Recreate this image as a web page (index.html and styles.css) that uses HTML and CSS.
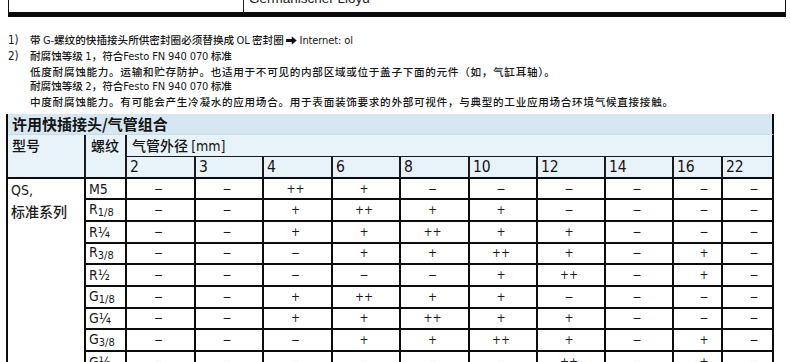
FILE: index.html
```html
<!DOCTYPE html>
<html lang="zh-CN">
<head>
<meta charset="utf-8">
<title>许用快插接头/气管组合</title>
<link rel="stylesheet" href="styles.css">
</head>
<body>
<div class="page">
  <div class="topbox">
    <div class="tb-left"></div>
    <div class="tb-right">Germanischer Lloyd</div>
  </div>

  <div class="notes">
    <div class="note">
      <span class="num">1)</span>
      <div class="ntext">带 <span class="lat">G-</span>螺纹的快插接头所供密封圈必须替换成 <span class="lat">OL</span> 密封圈 <svg class="arrow" viewBox="0 0 12 10" width="11" height="9"><path d="M0 3.4H6.3V0.4L11.8 5L6.3 9.6V6.6H0Z" fill="#111"/></svg> <span class="lat">Internet: ol</span></div>
    </div>
    <div class="note">
      <span class="num">2)</span>
      <div class="ntext">
        <div>耐腐蚀等级 <span class="lat">1</span>，符合<span class="lat">Festo FN 940 070</span> 标准</div>
        <div class="wide">低度耐腐蚀能力。运输和贮存防护。也适用于不可见的内部区域或位于盖子下面的元件（如，气缸耳轴）。</div>
        <div>耐腐蚀等级 <span class="lat">2</span>，符合<span class="lat">Festo FN 940 070</span> 标准</div>
        <div class="wide">中度耐腐蚀能力。有可能会产生冷凝水的应用场合。用于表面装饰要求的外部可视件，与典型的工业应用场合环境气候直接接触。</div>
      </div>
    </div>
  </div>

  <table class="combo">
    <colgroup>
      <col class="c-type"><col class="c-thread">
      <col class="c-w69"><col class="c-w68"><col class="c-w69"><col class="c-w68"><col class="c-w69">
      <col class="c-w68"><col class="c-w68"><col class="c-w68"><col class="c-w49"><col class="c-w51">
    </colgroup>
    <thead>
      <tr class="r-title"><th colspan="12" class="title">许用快插接头/气管组合</th></tr>
      <tr class="r-h1">
        <th rowspan="2" class="h-type">型号</th>
        <th rowspan="2" class="h-thread">螺纹</th>
        <th colspan="10" class="h-dia">气管外径 <span class="lat">[mm]</span></th>
      </tr>
      <tr class="r-h2">
        <th class="h-num">2</th><th class="h-num">3</th><th class="h-num">4</th><th class="h-num">6</th><th class="h-num">8</th>
        <th class="h-num">10</th><th class="h-num">12</th><th class="h-num">14</th><th class="h-num">16</th><th class="h-num">22</th>
      </tr>
    </thead>
    <tbody>
      <tr>
        <td rowspan="9" class="type"><div class="type-line"><span class="lat">QS,</span></div><div class="type-line">标准系列</div></td>
        <td class="thread">M5</td>
        <td>−</td><td>−</td><td>++</td><td>+</td><td>−</td><td>−</td><td>−</td><td>−</td><td class="nar">−</td><td class="nar">−</td>
      </tr>
      <tr>
        <td class="thread">R<span class="frac">1/8</span></td>
        <td>−</td><td>−</td><td>+</td><td>++</td><td>+</td><td>+</td><td>−</td><td>−</td><td class="nar">−</td><td class="nar">−</td>
      </tr>
      <tr>
        <td class="thread">R¼</td>
        <td>−</td><td>−</td><td>+</td><td>+</td><td>++</td><td>+</td><td>+</td><td>−</td><td class="nar">−</td><td class="nar">−</td>
      </tr>
      <tr>
        <td class="thread">R<span class="frac">3/8</span></td>
        <td>−</td><td>−</td><td>−</td><td>+</td><td>+</td><td>++</td><td>+</td><td>−</td><td class="nar">+</td><td class="nar">−</td>
      </tr>
      <tr>
        <td class="thread">R½</td>
        <td>−</td><td>−</td><td>−</td><td>−</td><td>−</td><td>+</td><td>++</td><td>−</td><td class="nar">+</td><td class="nar">−</td>
      </tr>
      <tr>
        <td class="thread">G<span class="frac">1/8</span></td>
        <td>−</td><td>−</td><td>+</td><td>++</td><td>+</td><td>+</td><td>−</td><td>−</td><td class="nar">−</td><td class="nar">−</td>
      </tr>
      <tr>
        <td class="thread">G¼</td>
        <td>−</td><td>−</td><td>+</td><td>+</td><td>++</td><td>+</td><td>+</td><td>−</td><td class="nar">−</td><td class="nar">−</td>
      </tr>
      <tr>
        <td class="thread">G<span class="frac">3/8</span></td>
        <td>−</td><td>−</td><td>−</td><td>+</td><td>+</td><td>++</td><td>+</td><td>−</td><td class="nar">+</td><td class="nar">−</td>
      </tr>
      <tr>
        <td class="thread">G½</td>
        <td>−</td><td>−</td><td>−</td><td>−</td><td>−</td><td>−</td><td>++</td><td>−</td><td class="nar">+</td><td class="nar">−</td>
      </tr>
    </tbody>
  </table>
</div>
</body>
</html>
```

FILE: styles.css
```css
html, body {
  margin: 0;
  padding: 0;
  background: #ffffff;
}

body {
  font-family: "Liberation Sans Narrow", "DejaVu Sans Condensed", "Liberation Sans", "Noto Sans CJK SC", sans-serif;
  color: #141414;
  overflow: hidden;
}

.page {
  width: 790px;
}

.lat {
  font-family: "Liberation Sans Narrow", "DejaVu Sans Condensed", "Liberation Sans", sans-serif;
}

/* top box (cut off) */
.topbox {
  display: flex;
  margin-top: -8px;
  margin-left: 8px;
  width: 776px;
  height: 20px;
  border-left: 1px solid #111;
  border-right: 1px solid #111;
  border-bottom: 5px solid #0a0a0a;
}

.tb-left {
  width: 234px;
  border-right: 1px solid #222;
}

.tb-right {
  padding-left: 5px;
  font-family: "Liberation Sans", "DejaVu Sans", sans-serif;
  font-size: 13.5px;
  line-height: 14px;
  color: #222;
}

/* footnotes */
.notes {
  margin-top: 16px;
  font-size: 10.6px;
  line-height: 14.75px;
  font-family: "Noto Sans CJK SC", sans-serif;
  font-weight: 500;
  color: #161616;
}

.notes .wide {
  letter-spacing: 0.7px;
}

.notes .lat {
  font-size: 11px;
  font-weight: normal;
  letter-spacing: -0.1px;
}

.note {
  display: flex;
}

.num {
  width: 22px;
  padding-left: 8px;
  font-family: "Liberation Sans Narrow", "DejaVu Sans Condensed", "Liberation Sans", sans-serif;
  font-size: 11.5px;
  font-weight: normal;
  flex: none;
}

.arrow {
  vertical-align: -1px;
}

/* table */
.combo {
  margin-top: 4px;
  margin-left: 6px;
  width: 768px;
  table-layout: fixed;
  border-collapse: separate;
  border-spacing: 0;
  border-left: 2px solid #0c0c0c;
}

.c-type { width: 78px; }
.c-thread { width: 41px; }
.c-w69 { width: 69px; }
.c-w68 { width: 68px; }
.c-w49 { width: 49px; }
.c-w51 { width: 51px; }

.combo th,
.combo td {
  padding: 0;
  box-sizing: border-box;
}

.combo th {
  font-weight: normal;
  text-align: left;
  vertical-align: top;
  background: #e8f2f9;
}

.r-title th.title {
  height: 21px;
  background: #d6e7f2;
  font-family: "Noto Sans CJK SC", sans-serif;
  font-weight: bold;
  font-size: 15px;
  line-height: 19px;
  padding-left: 4px;
  border-right: 2px solid #0c0c0c;
  border-bottom: 1px solid #c9dce8;
}

.r-h1 th {
  height: 22px;
  font-family: "Noto Sans CJK SC", sans-serif;
  font-weight: 500;
  font-size: 14px;
  line-height: 20px;
}

.h-type {
  padding-left: 4px !important;
  border-right: 2px solid #1a1a1a;
  border-bottom: 2px solid #0c0c0c;
}

.h-thread {
  padding-left: 5px !important;
  border-right: 2px solid #1a1a1a;
  border-bottom: 2px solid #0c0c0c;
}

.h-dia {
  padding-left: 5px !important;
  border-right: 2px solid #0c0c0c;
  border-bottom: 1px solid #1a1a1a;
}

.h-dia .lat {
  font-size: 14px;
  font-weight: normal;
}

.r-h2 th {
  height: 22px;
  font-size: 15.5px;
  line-height: 18px;
  padding-top: 1px;
  padding-left: 3px;
  border-right: 2px solid #1a1a1a;
  border-bottom: 2px solid #0c0c0c;
}

.r-h2 th:last-child {
  border-right-color: #0c0c0c;
}

.combo tbody tr {
  height: 21.65px;
}

.combo td {
  text-align: center;
  vertical-align: middle;
  font-size: 12px;
  line-height: 14px;
  padding-right: 4px;
  border-right: 2px solid #0c0c0c;
  border-bottom: 2px solid #0c0c0c;
  color: #1a1a1a;
}

.combo td.nar {
  padding-right: 0;
  padding-left: 13px;
}

.combo td.type {
  text-align: left;
  vertical-align: top;
  padding: 0 0 0 3px;
  font-family: "Noto Sans CJK SC", sans-serif;
  font-weight: 500;
  font-size: 14px;
  line-height: 14px;
  border-bottom: none;
  border-right: 2px solid #0c0c0c;
}

.type-line {
  height: 21.65px;
  display: flex;
  align-items: center;
}

.combo td.type .lat {
  font-size: 14px;
  font-weight: normal;
}

.combo td.thread {
  text-align: left;
  padding: 0 0 0 3px;
  font-size: 14px;
}

.frac {
  font-size: 11px;
  position: relative;
  top: 2px;
}
```
